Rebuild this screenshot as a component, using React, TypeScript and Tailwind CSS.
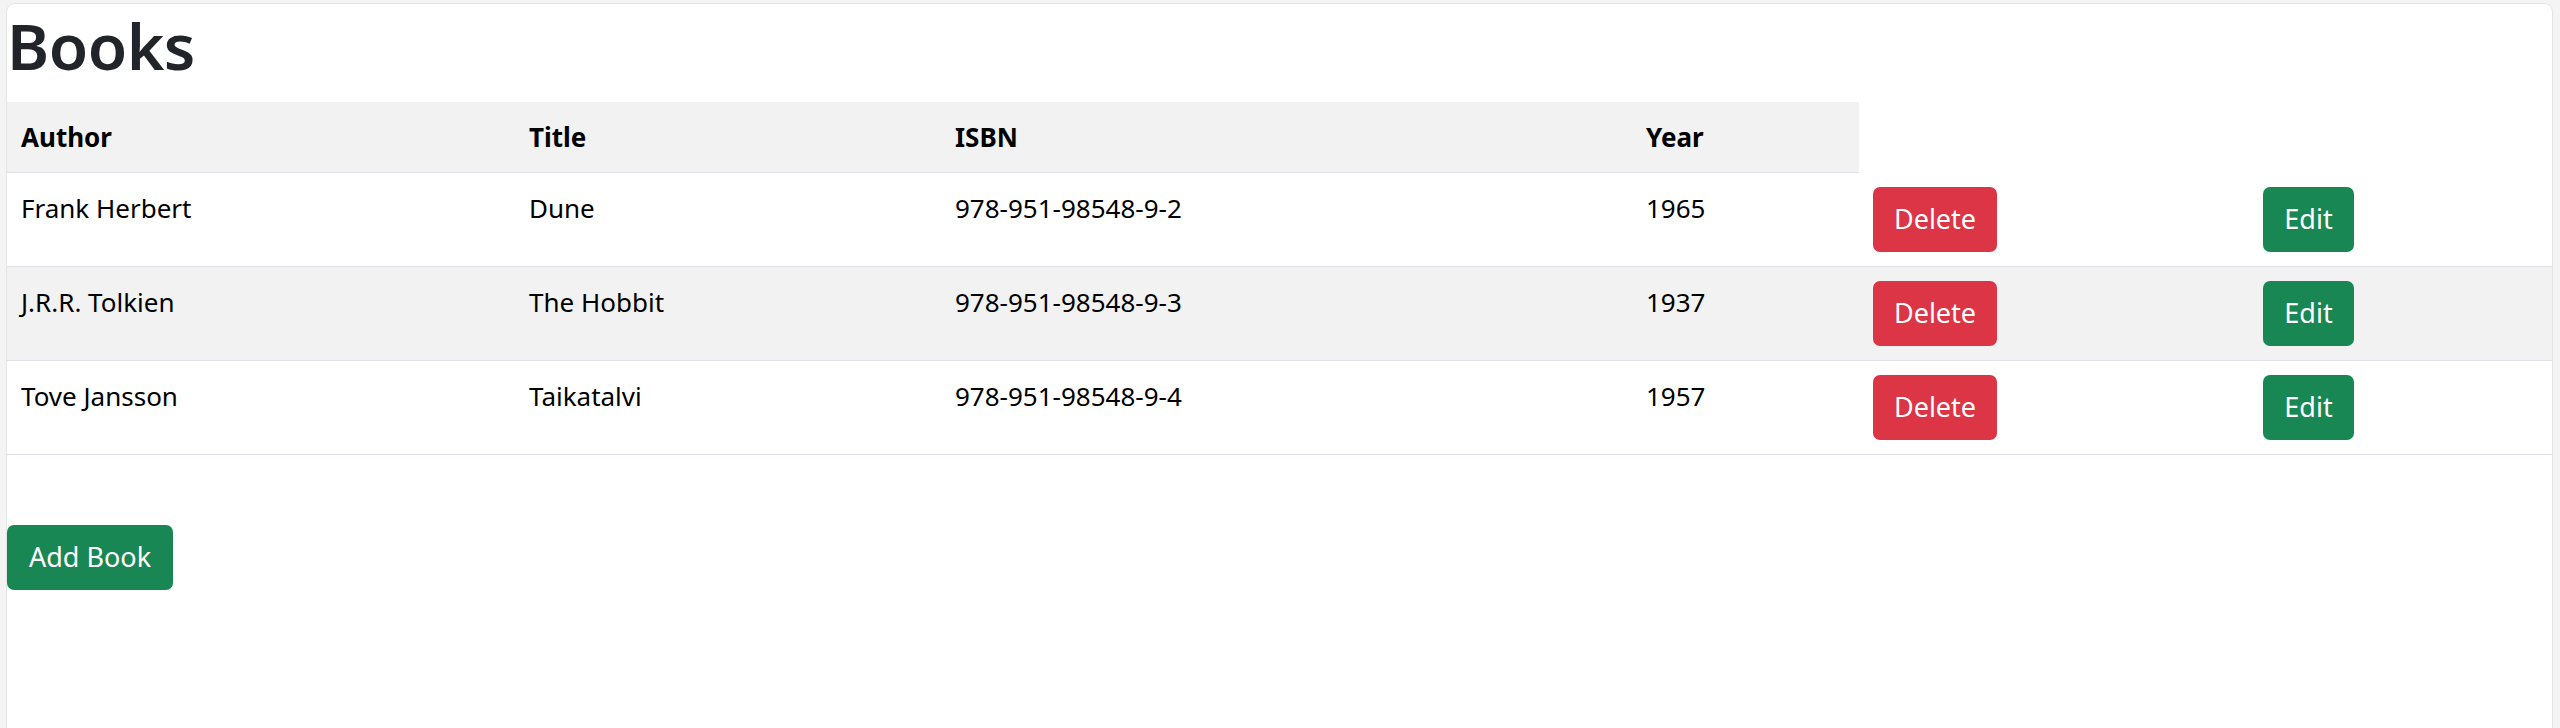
import React from "react";

const books = [
  { author: "Frank Herbert", title: "Dune", isbn: "978-951-98548-9-2", year: "1965" },
  { author: "J.R.R. Tolkien", title: "The Hobbit", isbn: "978-951-98548-9-3", year: "1937" },
  { author: "Tove Jansson", title: "Taikatalvi", isbn: "978-951-98548-9-4", year: "1957" },
];

export default function App() {
  return (
    <div
      className="h-[728px] overflow-hidden bg-[#f4f4f4] pl-[6px] pr-[7px] pt-[3px]"
      style={{ fontFamily: '"Noto Sans", "Open Sans", sans-serif' }}
    >
      <div className="h-[730px] rounded-t-[9px] border border-b-0 border-[#e4e4e4] bg-white">
        <h1 className="mb-[14px] text-[64px] font-semibold leading-[84px] tracking-[-0.5px] text-[#212529]">Books</h1>
        <table className="w-full table-fixed border-collapse text-[26px] text-black">
          <colgroup>
            <col className="w-[508px]" />
            <col className="w-[426px]" />
            <col className="w-[691px]" />
            <col className="w-[227px]" />
            <col className="w-[390px]" />
            <col />
          </colgroup>
          <thead>
            <tr>
              {["Author", "Title", "ISBN", "Year"].map((h) => (
                <th
                  key={h}
                  className="border-b border-[#dee2e6] bg-[#f2f2f2] px-[14px] py-[14px] text-left font-bold leading-[42px]"
                >
                  {h}
                </th>
              ))}
            </tr>
          </thead>
          <tbody>
            {books.map((b, i) => (
              <tr key={b.isbn} className={i % 2 === 1 ? "bg-[#f2f2f2]" : "bg-white"}>
                <td className="border-b border-[#dee2e6] px-[14px] py-[14px] align-top leading-[42px]">{b.author}</td>
                <td className="border-b border-[#dee2e6] px-[14px] py-[14px] align-top leading-[42px]">{b.title}</td>
                <td className="border-b border-[#dee2e6] px-[14px] py-[14px] align-top leading-[42px]">{b.isbn}</td>
                <td className="border-b border-[#dee2e6] px-[14px] py-[14px] align-top leading-[42px]">{b.year}</td>
                <td className="border-b border-[#dee2e6] px-[14px] py-[14px] align-top">
                  <button className="flex h-[65px] w-[124px] items-center justify-center rounded-[7px] bg-[#dc3545] text-[27px] text-white">
                    Delete
                  </button>
                </td>
                <td className="border-b border-[#dee2e6] px-[14px] py-[14px] align-top">
                  <button className="flex h-[65px] w-[91px] items-center justify-center rounded-[7px] bg-[#198754] text-[27px] text-white">
                    Edit
                  </button>
                </td>
              </tr>
            ))}
          </tbody>
        </table>
        <button className="mt-[70px] flex h-[65px] w-[166px] items-center justify-center rounded-[7px] bg-[#198754] text-[27px] text-white">
          Add Book
        </button>
      </div>
    </div>
  );
}
